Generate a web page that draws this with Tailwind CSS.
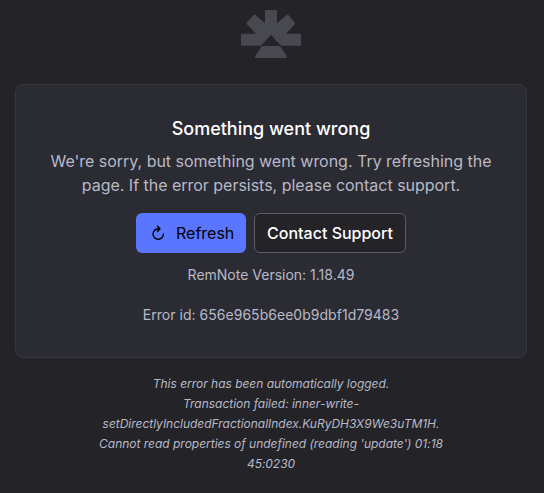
<!DOCTYPE html>
<html lang="en"><head><meta charset="utf-8"><title>Something went wrong</title>
<script src="https://cdn.jsdelivr.net/npm/@tailwindcss/browser@4"></script></head>
<body class="bg-[#232328] h-[493px] overflow-hidden font-['Inter',sans-serif]">
<main class="flex flex-col items-center pt-[9px] pl-[15px] pr-[17px]">
<svg class="w-[62px] h-[50px]" viewBox="0 0 62 50" fill="#484851" stroke="#484851" stroke-width="2" stroke-linejoin="round"><path d="M26 2H36V16.5L47.5 6.5L54 14.5L43.5 25.8H60V35.7H41.5L31 24.5L20.5 35.7H2V25.8H18.5L7.5 14.5L14.5 6.5L26 16.5Z"/><path stroke="none" d="M22 37H40L46.6 46.8Q47.6 49 45.6 49H16.4Q14.4 49 15.4 46.8Z"/><path fill="#232328" stroke="none" d="M31 26L40.2 37H21.8Z"/></svg>
<section class="mt-[25px] w-full h-[274px] rounded-lg border border-[#36363d] bg-[#2b2b33] flex flex-col items-center text-center pt-[32px]">
<h1 class="text-[18px] leading-6 font-medium text-white">Something went wrong</h1>
<p class="mt-2 text-[16px] leading-6 tracking-[-0.02px] text-[#b9b9c6]">We're sorry, but something went wrong. Try refreshing the<br>page. If the error persists, please contact support.</p>
<div class="mt-4 flex gap-2">
<button class="w-[110px] h-10 rounded-md bg-[#5b76fe] text-black text-[16px] flex items-center pl-[14px] gap-[10px]"><svg class="w-4 h-4" viewBox="0 0 16 16" fill="none" stroke="currentColor" stroke-width="1.4" stroke-linecap="round" stroke-linejoin="round"><path d="M10 3.8H8a5.2 5.2 0 1 0 5.4 5.2M7.5 1.2L10 3.8L7.5 6.4"/></svg>Refresh</button>
<button class="w-[152px] h-10 rounded-md border border-[#5b5b63] bg-[#232328] text-white text-[16px] font-medium">Contact Support</button>
</div>
<p class="mt-3 text-[14px] leading-5 text-[#b9b9c6]">RemNote Version: 1.18.49</p>
<p class="mt-5 text-[14px] leading-5 tracking-[0.03px] text-[#b9b9c6]">Error id: 656e965b6ee0b9dbf1d79483</p>
</section>
<p class="mt-4 text-center text-[12px] leading-5 tracking-[-0.02px] italic text-[#b9b9c6]">This error has been automatically logged.<br>Transaction failed: inner-write-<br>setDirectlyIncludedFractionalIndex.KuRyDH3X9We3uTM1H.<br>Cannot read properties of undefined (reading 'update') 01:18<br>45:0230</p>
</main></body></html>
